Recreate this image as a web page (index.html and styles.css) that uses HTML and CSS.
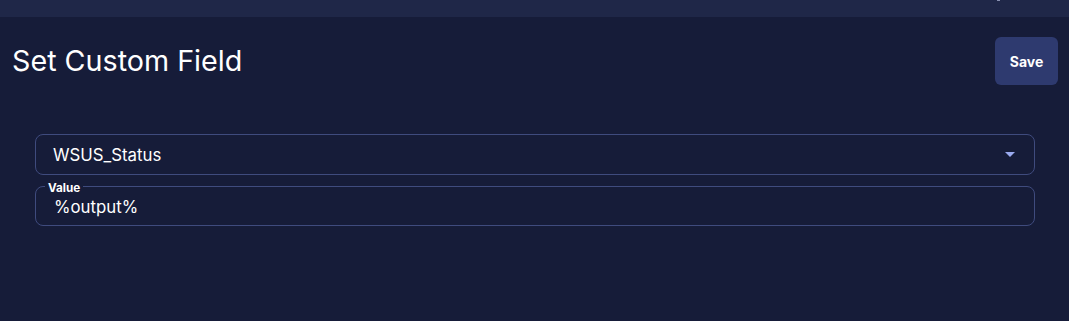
FILE: index.html
```html
<!DOCTYPE html>
<html>
<head>
<meta charset="utf-8">
<link rel="stylesheet" href="styles.css">
</head>
<body>
<div class="topbar"><span class="dot"></span></div>
<div class="header">
  <h1 class="title">Set Custom Field</h1>
  <button class="save">Save</button>
</div>
<div class="form">
  <div class="select">
    <span class="select-text">WSUS_Status</span>
    <svg class="caret" width="10" height="5" viewBox="0 0 10 5"><path d="M0 0 L10 0 L5 5 Z" fill="#9aaaf0"/></svg>
  </div>
  <div class="field">
    <span class="legend">Value</span>
    <span class="field-text">%output%</span>
  </div>
</div>
</body>
</html>
```
FILE: styles.css
```css
html, body {
  margin: 0;
  padding: 0;
  background: #161c39;
  font-family: Inter, "Noto Sans", sans-serif;
  color: #ffffff;
  height: 100%;
}
.topbar {
  height: 17px;
  background: #1f2748;
  position: relative;
}
.dot {
  position: absolute;
  left: 997px;
  top: 0;
  width: 3px;
  height: 1px;
  background: #8890b0;
}
.header {
  display: flex;
  justify-content: space-between;
  align-items: center;
  padding: 20px 11px 0 12px;
}
.title {
  margin: 0;
  font-size: 28.7px;
  font-weight: 400;
  line-height: 34px;
  letter-spacing: 0;
}
.save {
  width: 63px;
  height: 48px;
  border: none;
  border-radius: 6px;
  background: #2e3a6f;
  color: #ffffff;
  font-family: Inter, "Noto Sans", sans-serif;
  font-weight: 700;
  font-size: 14px;
  padding: 0;
}
.form {
  padding: 49px 34px 0 35px;
  display: flex;
  flex-direction: column;
  gap: 11px;
}
.select {
  height: 39px;
  border: 1px solid #3f4b7e;
  border-radius: 8px;
  display: flex;
  align-items: center;
  justify-content: space-between;
  padding: 0 19px 0 17px;
}
.select-text {
  font-size: 16.8px;
}
.caret {
  margin-top: -1px;
}
.field {
  position: relative;
  height: 38px;
  border: 1px solid #3f4b7e;
  border-radius: 8px;
  padding: 0 18px;
  display: flex;
  align-items: center;
}
.legend {
  position: absolute;
  left: 9px;
  top: -4px;
  padding: 0 3px;
  background: #161c39;
  font-size: 11.7px;
  font-weight: 700;
  line-height: 10px;
}
.field-text {
  font-size: 16.8px;
  margin-top: 1px;
}
```
